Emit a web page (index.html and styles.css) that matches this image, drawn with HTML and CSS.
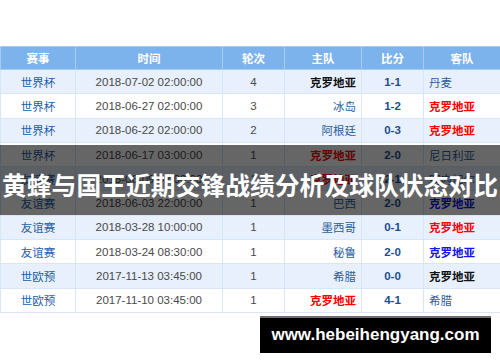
FILE: index.html
```
<!DOCTYPE html>
<html lang="zh-CN">

<head>
    <meta charset="UTF-8">
    <title>黄蜂与国王近期交锋战绩分析及球队状态对比</title>
    <link rel="stylesheet" href="styles.css">
</head>

<body>

    <div class="page">
        <table class="match-table">
            <colgroup>
                <col class="col-type">
                <col class="col-time">
                <col class="col-round">
                <col class="col-home">
                <col class="col-score">
                <col class="col-away">
            </colgroup>
            <thead>
                <tr>
                    <th>赛事</th>
                    <th>时间</th>
                    <th>轮次</th>
                    <th>主队</th>
                    <th>比分</th>
                    <th>客队</th>
                </tr>
            </thead>
            <tbody>
                <tr class="alt">
                    <td class="type">世界杯</td>
                    <td class="time">2018-07-02 02:00:00</td>
                    <td class="round">4</td>
                    <td class="home"><span class="team-black">克罗地亚</span></td>
                    <td class="score">1-1</td>
                    <td class="away">丹麦</td>
                </tr>
                <tr>
                    <td class="type">世界杯</td>
                    <td class="time">2018-06-27 02:00:00</td>
                    <td class="round">3</td>
                    <td class="home">冰岛</td>
                    <td class="score">1-2</td>
                    <td class="away"><span class="team-red">克罗地亚</span></td>
                </tr>
                <tr class="alt">
                    <td class="type">世界杯</td>
                    <td class="time">2018-06-22 02:00:00</td>
                    <td class="round">2</td>
                    <td class="home">阿根廷</td>
                    <td class="score">0-3</td>
                    <td class="away"><span class="team-red">克罗地亚</span></td>
                </tr>
                <tr>
                    <td class="type">世界杯</td>
                    <td class="time">2018-06-17 03:00:00</td>
                    <td class="round">1</td>
                    <td class="home"><span class="team-red">克罗地亚</span></td>
                    <td class="score">2-0</td>
                    <td class="away">尼日利亚</td>
                </tr>
                <tr class="alt">
                    <td class="type">友谊赛</td>
                    <td class="time">2018-06-09 02:00:00</td>
                    <td class="round">1</td>
                    <td class="home"><span class="team-red">克罗地亚</span></td>
                    <td class="score">2-1</td>
                    <td class="away">塞内加尔</td>
                </tr>
                <tr>
                    <td class="type">友谊赛</td>
                    <td class="time">2018-06-03 22:00:00</td>
                    <td class="round">1</td>
                    <td class="home">巴西</td>
                    <td class="score">2-0</td>
                    <td class="away"><span class="team-blue">克罗地亚</span></td>
                </tr>
                <tr class="alt">
                    <td class="type">友谊赛</td>
                    <td class="time">2018-03-28 10:00:00</td>
                    <td class="round">1</td>
                    <td class="home">墨西哥</td>
                    <td class="score">0-1</td>
                    <td class="away"><span class="team-red">克罗地亚</span></td>
                </tr>
                <tr>
                    <td class="type">友谊赛</td>
                    <td class="time">2018-03-24 08:30:00</td>
                    <td class="round">1</td>
                    <td class="home">秘鲁</td>
                    <td class="score">2-0</td>
                    <td class="away"><span class="team-blue">克罗地亚</span></td>
                </tr>
                <tr class="alt">
                    <td class="type">世欧预</td>
                    <td class="time">2017-11-13 03:45:00</td>
                    <td class="round">1</td>
                    <td class="home">希腊</td>
                    <td class="score">0-0</td>
                    <td class="away"><span class="team-black">克罗地亚</span></td>
                </tr>
                <tr>
                    <td class="type">世欧预</td>
                    <td class="time">2017-11-10 03:45:00</td>
                    <td class="round">1</td>
                    <td class="home"><span class="team-red">克罗地亚</span></td>
                    <td class="score">4-1</td>
                    <td class="away">希腊</td>
                </tr>
            </tbody>
        </table>

        <div class="title-band">
            <h1>黄蜂与国王近期交锋战绩分析及球队状态对比</h1>
        </div>

        <div class="watermark">www.hebeihengyang.com</div>
    </div>

</body>

</html>
```

FILE: styles.css
```
body {
    margin: 0;
    background-color: #fff;
    font-family: "Liberation Sans", "Noto Sans CJK SC", sans-serif;
}

.page {
    position: relative;
    width: 500px;
    height: 362px;
    padding-top: 46px;
    box-sizing: border-box;
}

.match-table {
    width: 500px;
    border-collapse: collapse;
    table-layout: fixed;
    font-size: 11.5px;
}

.match-table th,
.match-table td {
    box-sizing: border-box;
    border: 1px solid #d7e6f8;
    padding: 0 5px;
    white-space: nowrap;
    overflow: hidden;
}

.match-table th {
    height: 23px;
    background-color: #7db3ec;
    color: #fff;
    font-weight: bold;
    text-align: center;
    border-color: #a8cbf2;
}

.match-table tbody tr {
    height: 24.3px;
}

.match-table tbody tr.alt {
    background-color: #e7f0fc;
}

.col-type {
    width: 75px;
}

.col-time {
    width: 147px;
}

.col-round {
    width: 62px;
}

.col-home {
    width: 77px;
}

.col-score {
    width: 62px;
}

.col-away {
    width: 77px;
}

.type {
    text-align: center;
    color: #1f5ea6;
}

.match-table td.time,
.match-table td.round {
    text-align: center;
    color: #4a4a4a;
}

.match-table td.home {
    text-align: right;
    color: #2a5e9e;
}

.match-table td.away {
    text-align: left;
    color: #2a5e9e;
}

.score {
    text-align: center;
    font-weight: bold;
    color: #1c4f8e;
}

.team-red,
.team-blue,
.team-black {
    font-weight: bold;
}

.team-red {
    color: #f00;
}

.team-blue {
    color: #1414e6;
}

.team-black {
    color: #111;
}

.title-band {
    position: absolute;
    left: 0;
    top: 145px;
    width: 500px;
    height: 70px;
    background-color: rgba(0, 0, 0, 0.6);
    display: flex;
    align-items: center;
    justify-content: center;
}

.title-band h1 {
    margin: 8px 0 0;
    color: #fff;
    font-family: "Noto Sans CJK SC", sans-serif;
    font-size: 24.8px;
    font-weight: bold;
    white-space: nowrap;
    line-height: 1;
}

.watermark {
    position: absolute;
    left: 260px;
    top: 316px;
    width: 231px;
    height: 37px;
    box-sizing: border-box;
    border-top: 2px solid #6e6e6e;
    background-color: #000;
    color: #fff;
    font-family: "Liberation Sans", sans-serif;
    font-size: 17px;
    font-weight: bold;
    display: flex;
    align-items: center;
    justify-content: center;
    padding-bottom: 1px;
}
```
